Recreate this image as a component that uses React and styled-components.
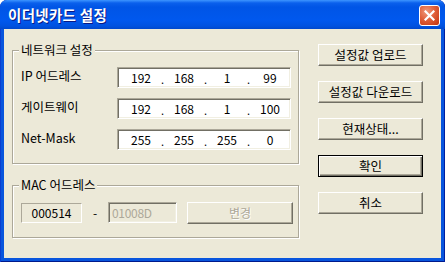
import React from "react";
import styled, { createGlobalStyle } from "styled-components";

const Global = createGlobalStyle`
  html, body { margin: 0; padding: 0; background: #ffffff; }
  body { font-family: "Noto Sans CJK KR", "Noto Sans", sans-serif; }
  * { box-sizing: border-box; }
`;

const Window = styled.div`
  width: 445px;
  height: 262px;
  display: flex;
  flex-direction: column;
  border-radius: 7px 7px 0 0;
  background: #0855dd;
  box-shadow: inset 1px 0 #0a3ed0, inset -1px 0 #001ea0, inset 0 -1px #001a8c;
  overflow: hidden;
`;

const TitleBar = styled.div`
  height: 29px;
  flex: none;
  display: flex;
  align-items: center;
  justify-content: space-between;
  padding: 0 5px 0 8px;
  border-radius: 7px 7px 0 0;
  background: linear-gradient(
    to bottom,
    #3d95ff 0px,
    #0a60ec 3px,
    #0055e6 7px,
    #0058ee 20px,
    #0052e0 26px,
    #0048cc 29px
  );
`;

const Title = styled.span`
  color: #ffffff;
  font-weight: 700;
  font-size: 14.5px;
  letter-spacing: 0.3px;
  text-shadow: 1px 1px #0a1883;
  line-height: 16px;
  margin-top: 1px;
`;

const CloseButton = styled.div`
  width: 21px;
  height: 21px;
  border: 1px solid #ffffff;
  border-radius: 3px;
  background: radial-gradient(circle at 35% 30%, #ef9a7c 0%, #e0603b 45%, #c4320c 100%);
  display: flex;
  align-items: center;
  justify-content: center;
  margin-top: 1px;
`;

const Client = styled.div`
  flex: 1;
  margin: 0 4px 4px 4px;
  background: #ece9d8;
  display: flex;
  gap: 19px;
  padding: 0 0 0 8px;
  color: #000000;
  font-size: 12.5px;
`;

const LeftColumn = styled.div`
  display: flex;
  flex-direction: column;
  gap: 21px;
  padding-top: 21px;
  width: 287px;
`;

const GroupBox = styled.div`
  position: relative;
  height: ${(p) => p.$h}px;
  border: 1px solid #aca899;
  box-shadow: inset 1px 1px #ffffff, 1px 1px #ffffff;
  padding: 16px 0 0 8px;
  display: flex;
  flex-direction: column;
  gap: 10px;
`;

const Caption = styled.span`
  position: absolute;
  top: -8px;
  left: 6px;
  padding: 0 2px;
  background: #ece9d8;
  line-height: 14px;
`;

const FieldRow = styled.div`
  display: flex;
  align-items: center;
  height: 21px;
`;

const FieldLabel = styled.span`
  width: 96px;
  line-height: 14px;
  margin-top: -3px;
`;

const sunken = `
  border-style: solid;
  border-width: 1px;
  border-color: #aca899 #ffffff #ffffff #aca899;
  box-shadow: inset 1px 1px #716f64, inset -1px -1px #f1efe2;
`;

const IpBox = styled.div`
  ${sunken}
  width: 174px;
  height: 21px;
  background: #ffffff;
  display: flex;
  align-items: center;
  padding-left: 3px;
  font-size: 12px;
`;

const Octet = styled.span`
  width: 40px;
  text-align: center;
  line-height: 14px;
`;

const Dot = styled.span`
  width: 3px;
  text-align: center;
  line-height: 14px;
  font-size: 11px;
  margin-top: 3px;
`;

const MacRow = styled.div`
  display: flex;
  align-items: center;
  height: 21px;
  font-size: 12px;
`;

const StaticBox = styled.div`
  width: 61px;
  height: 20px;
  border: 1px solid;
  border-color: #aca899 #ffffff #ffffff #aca899;
  display: flex;
  align-items: center;
  justify-content: center;
  line-height: 14px;
`;

const Dash = styled.span`
  width: 26px;
  text-align: center;
  line-height: 14px;
`;

const DisabledEdit = styled.div`
  ${sunken}
  width: 69px;
  height: 21px;
  background: #ece9d8;
  color: #aca899;
  display: flex;
  align-items: center;
  padding-left: 3px;
  line-height: 14px;
  letter-spacing: -0.3px;
`;

const RightColumn = styled.div`
  display: flex;
  flex-direction: column;
  gap: 15px;
  padding-top: 15px;
`;

const Button = styled.div`
  width: ${(p) => p.$w || 105}px;
  height: 22px;
  display: flex;
  align-items: center;
  justify-content: center;
  background: #ece9d8;
  line-height: 14px;
  margin-left: ${(p) => p.$ml || 0}px;
  border: 1px solid;
  border-color: ${(p) => (p.$default ? "#000000" : "#ffffff #716f64 #716f64 #ffffff")};
  box-shadow: ${(p) =>
    p.$default
      ? "inset 1px 1px #ffffff, inset -1px -1px #716f64, inset -2px -2px #aca899"
      : "inset -1px -1px #aca899"};
  color: ${(p) => (p.$disabled ? "#aca899" : "#000000")};
  text-shadow: ${(p) => (p.$disabled ? "1px 1px #ffffff" : "none")};
`;

const Ip = ({ parts }) => (
  <IpBox>
    {parts.map((v, i) => (
      <React.Fragment key={i}>
        <Octet>{v}</Octet>
        {i < 3 && <Dot>.</Dot>}
      </React.Fragment>
    ))}
  </IpBox>
);

export default function App() {
  return (
    <>
      <Global />
      <Window>
        <TitleBar>
          <Title>이더넷카드 설정</Title>
          <CloseButton>
            <svg width="11" height="11" viewBox="0 0 11 11">
              <path d="M1.5 1.5 L9.5 9.5 M9.5 1.5 L1.5 9.5" stroke="#ffffff" strokeWidth="2.2" strokeLinecap="square" />
            </svg>
          </CloseButton>
        </TitleBar>
        <Client>
          <LeftColumn>
            <GroupBox $h={114}>
              <Caption>네트워크 설정</Caption>
              <FieldRow>
                <FieldLabel>IP 어드레스</FieldLabel>
                <Ip parts={["192", "168", "1", "99"]} />
              </FieldRow>
              <FieldRow>
                <FieldLabel>게이트웨이</FieldLabel>
                <Ip parts={["192", "168", "1", "100"]} />
              </FieldRow>
              <FieldRow>
                <FieldLabel>Net-Mask</FieldLabel>
                <Ip parts={["255", "255", "255", "0"]} />
              </FieldRow>
            </GroupBox>
            <GroupBox $h={53}>
              <Caption>MAC 어드레스</Caption>
              <MacRow>
                <StaticBox>000514</StaticBox>
                <Dash>-</Dash>
                <DisabledEdit>01008D</DisabledEdit>
                <Button $w={106} $ml={10} $disabled>
                  변경
                </Button>
              </MacRow>
            </GroupBox>
          </LeftColumn>
          <RightColumn>
            <Button>설정값 업로드</Button>
            <Button>설정값 다운로드</Button>
            <Button>현재상태...</Button>
            <Button $default>확인</Button>
            <Button>취소</Button>
          </RightColumn>
        </Client>
      </Window>
    </>
  );
}
